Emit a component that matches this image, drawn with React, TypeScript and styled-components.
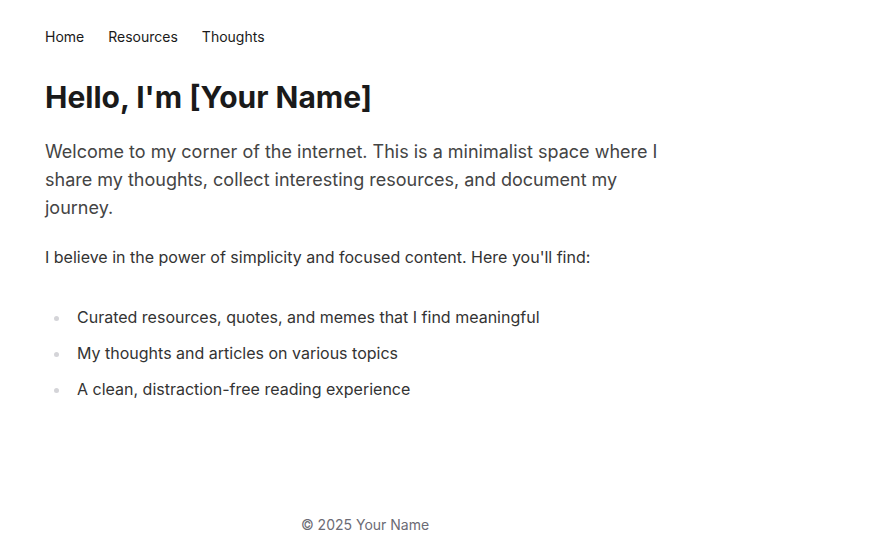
import React from "react";
import styled, { createGlobalStyle } from "styled-components";

const Global = createGlobalStyle`
  * { box-sizing: border-box; }
  html, body { margin: 0; padding: 0; background: #ffffff; }
  body { font-family: Inter, "Noto Sans", sans-serif; color: #1a1a1a; -webkit-font-smoothing: antialiased; }
`;

const Page = styled.div`
  width: 640px;
  margin-left: 45px;
  display: flex;
  flex-direction: column;
  min-height: 559px;
`;

const Nav = styled.nav`
  display: flex;
  gap: 24px;
  padding-top: 27px;
  height: 60px;
`;

const NavLink = styled.a`
  font-size: 14px;
  line-height: 20px;
  color: #1a1a1a;
  text-decoration: none;
`;

const Main = styled.main`
  flex: 1;
  padding-top: 17px;
`;

const Title = styled.h1`
  margin: 0 0 21px;
  font-size: 30px;
  line-height: 40px;
  font-weight: 700;
  color: #1a1a1a;
`;

const Lead = styled.p`
  margin: 0 0 23px;
  font-size: 18px;
  line-height: 28px;
  color: #444444;
  max-width: 620px;
`;

const Body = styled.p`
  margin: 0 0 36px;
  font-size: 16px;
  line-height: 24px;
  color: #333333;
`;

const List = styled.ul`
  margin: 0;
  padding: 0 0 0 32px;
  list-style: none;
  display: flex;
  flex-direction: column;
  gap: 12px;
`;

const Item = styled.li`
  position: relative;
  font-size: 16px;
  line-height: 24px;
  color: #333333;
  &::before {
    content: "";
    position: absolute;
    left: -23px;
    top: 11px;
    width: 5px;
    height: 5px;
    border-radius: 50%;
    background: #d4d4d8;
  }
`;

const Footer = styled.footer`
  text-align: center;
  font-size: 14px;
  line-height: 20px;
  color: #6b6b75;
  padding-bottom: 24px;
`;

export default function App() {
  return (
    <>
      <Global />
      <Page>
        <Nav>
          <NavLink href="#">Home</NavLink>
          <NavLink href="#">Resources</NavLink>
          <NavLink href="#">Thoughts</NavLink>
        </Nav>
        <Main>
          <Title>Hello, I'm [Your Name]</Title>
          <Lead>
            Welcome to my corner of the internet. This is a minimalist space where I share my
            thoughts, collect interesting resources, and document my journey.
          </Lead>
          <Body>I believe in the power of simplicity and focused content. Here you'll find:</Body>
          <List>
            <Item>Curated resources, quotes, and memes that I find meaningful</Item>
            <Item>My thoughts and articles on various topics</Item>
            <Item>A clean, distraction-free reading experience</Item>
          </List>
        </Main>
        <Footer>© 2025 Your Name</Footer>
      </Page>
    </>
  );
}
